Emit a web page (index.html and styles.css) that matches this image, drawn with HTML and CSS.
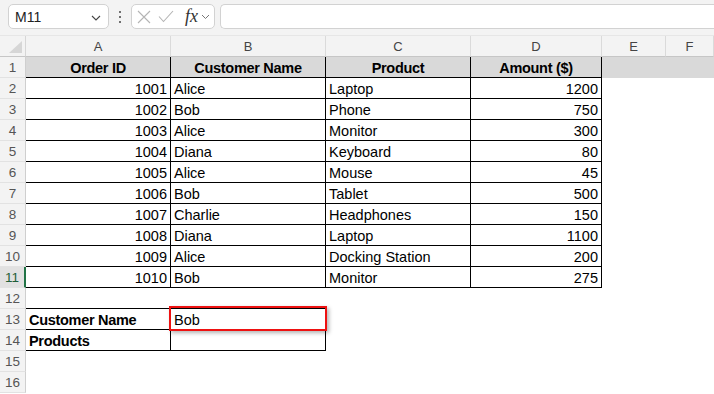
FILE: index.html
```html
<!DOCTYPE html>
<html>
<head>
<meta charset="utf-8">
<link rel="stylesheet" href="styles.css">
</head>
<body>
<div class="toolbar">
  <div class="namebox"><span>M11</span>
    <svg class="chev" width="10" height="6" viewBox="0 0 10 6"><path d="M1 1 L5 5 L9 1" fill="none" stroke="#444" stroke-width="1.1"/></svg>
  </div>
  <div class="dots"><span></span><span></span><span></span></div>
  <div class="fbox">
    <svg width="14" height="14" viewBox="0 0 14 14"><path d="M1 1 L13 13 M13 1 L1 13" stroke="#b4b4b4" stroke-width="1.1" fill="none"/></svg>
    <svg width="16" height="13" viewBox="0 0 16 13"><path d="M1 6.5 L5.5 11.5 L15 1" stroke="#b4b4b4" stroke-width="1.1" fill="none"/></svg>
    <span class="fx">fx</span>
    <svg width="9" height="6" viewBox="0 0 9 6"><path d="M1 1 L4.5 4.5 L8 1" fill="none" stroke="#777" stroke-width="1"/></svg>
  </div>
  <div class="finput"></div>
</div>
<div class="sheet">
  <div class="corner"><svg width="14" height="13" viewBox="0 0 14 13"><polygon points="13,0 13,12 0,12" fill="#d6d6d6"/></svg></div>
  <div class="ch">A</div><div class="ch">B</div><div class="ch">C</div><div class="ch">D</div><div class="ch">E</div><div class="ch">F</div>

  <div class="rh">1</div><div class="c t hd">Order ID</div><div class="c t hd">Customer Name</div><div class="c t hd">Product</div><div class="c t hd">Amount ($)</div><div class="c gfill"></div><div class="c gfill"></div>
  <div class="rh">2</div><div class="c t r">1001</div><div class="c t">Alice</div><div class="c t">Laptop</div><div class="c t r">1200</div><div class="c"></div><div class="c"></div>
  <div class="rh">3</div><div class="c t r">1002</div><div class="c t">Bob</div><div class="c t">Phone</div><div class="c t r">750</div><div class="c"></div><div class="c"></div>
  <div class="rh">4</div><div class="c t r">1003</div><div class="c t">Alice</div><div class="c t">Monitor</div><div class="c t r">300</div><div class="c"></div><div class="c"></div>
  <div class="rh">5</div><div class="c t r">1004</div><div class="c t">Diana</div><div class="c t">Keyboard</div><div class="c t r">80</div><div class="c"></div><div class="c"></div>
  <div class="rh">6</div><div class="c t r">1005</div><div class="c t">Alice</div><div class="c t">Mouse</div><div class="c t r">45</div><div class="c"></div><div class="c"></div>
  <div class="rh">7</div><div class="c t r">1006</div><div class="c t">Bob</div><div class="c t">Tablet</div><div class="c t r">500</div><div class="c"></div><div class="c"></div>
  <div class="rh">8</div><div class="c t r">1007</div><div class="c t">Charlie</div><div class="c t">Headphones</div><div class="c t r">150</div><div class="c"></div><div class="c"></div>
  <div class="rh">9</div><div class="c t r">1008</div><div class="c t">Diana</div><div class="c t">Laptop</div><div class="c t r">1100</div><div class="c"></div><div class="c"></div>
  <div class="rh">10</div><div class="c t r">1009</div><div class="c t">Alice</div><div class="c t">Docking Station</div><div class="c t r">200</div><div class="c"></div><div class="c"></div>
  <div class="rh sel">11</div><div class="c t r">1010</div><div class="c t">Bob</div><div class="c t">Monitor</div><div class="c t r">275</div><div class="c"></div><div class="c"></div>
  <div class="rh">12</div><div class="c bb"></div><div class="c bb"></div><div class="c"></div><div class="c"></div><div class="c"></div><div class="c"></div>
  <div class="rh">13</div><div class="c t b">Customer Name</div><div class="c t">Bob</div><div class="c"></div><div class="c"></div><div class="c"></div><div class="c"></div>
  <div class="rh">14</div><div class="c t b">Products</div><div class="c t"></div><div class="c"></div><div class="c"></div><div class="c"></div><div class="c"></div>
  <div class="rh">15</div><div class="c"></div><div class="c"></div><div class="c"></div><div class="c"></div><div class="c"></div><div class="c"></div>
  <div class="rh">16</div><div class="c"></div><div class="c"></div><div class="c"></div><div class="c"></div><div class="c"></div><div class="c"></div>
</div>
<div class="hilite"></div>
</body>
</html>
```
FILE: styles.css
```css
html, body {
  margin: 0;
  padding: 0;
}
body {
  width: 714px;
  height: 394px;
  overflow: hidden;
  position: relative;
  background: #fff;
  font-family: "Liberation Sans", Arial, sans-serif;
  color: #000;
}
.toolbar {
  height: 36px;
  box-sizing: border-box;
  background: #f3f3f3;
  display: flex;
  align-items: flex-start;
  padding: 4px 0 0 8px;
  border-bottom: 1px solid #e6e6e6;
}
.namebox {
  width: 101px;
  height: 25px;
  box-sizing: border-box;
  background: #fff;
  border: 1px solid #d2d2d2;
  border-radius: 5px;
  display: flex;
  align-items: center;
  justify-content: space-between;
  padding: 0 7px 0 6px;
  font-size: 14px;
  color: #222;
}
.chev { margin-top: 2px; }
.dots {
  width: 22px;
  height: 25px;
  display: flex;
  flex-direction: column;
  align-items: center;
  justify-content: center;
  gap: 3px;
}
.dots span {
  width: 2px;
  height: 2px;
  background: #444;
  border-radius: 1px;
}
.fbox {
  width: 84px;
  height: 25px;
  box-sizing: border-box;
  background: #fff;
  border: 1px solid #d2d2d2;
  border-radius: 5px;
  display: flex;
  align-items: center;
  padding: 0 3px 0 5px;
  gap: 8px;
}
.fbox svg:nth-child(2) { margin-left: -1px; }
.fx {
  font-family: "Liberation Serif", "Times New Roman", serif;
  font-style: italic;
  font-size: 18px;
  color: #333;
  margin-left: 3px;
  margin-right: -5px;
  line-height: 1;
  margin-top: -2px;
}
.finput {
  flex: 1;
  height: 25px;
  margin-left: 5px;
  box-sizing: border-box;
  background: #fff;
  border: 1px solid #d2d2d2;
  border-right: none;
  border-radius: 5px 0 0 5px;
}
.sheet {
  display: grid;
  grid-template-columns: 26px 145px 155px 145px 131px 64px 48px;
  grid-auto-rows: 21px;
}
.corner {
  background: #f3f3f3;
  border-right: 1px solid #d6d6d6;
  border-bottom: 1px solid #c6c6c6;
  box-sizing: border-box;
  display: flex;
  align-items: flex-end;
  justify-content: flex-end;
  padding: 0 2px 2px 0;
}
.ch {
  background: #f3f3f3;
  box-sizing: border-box;
  border-right: 1px solid #dadada;
  border-bottom: 1px solid #c6c6c6;
  font-size: 13px;
  color: #444;
  text-align: center;
  line-height: 20px;
  padding-top: 1px;
}
.rh {
  background: #f3f3f3;
  box-sizing: border-box;
  border-right: 1px solid #cfcfcf;
  border-bottom: 1px solid #e2e2e2;
  font-size: 13.5px;
  color: #555;
  text-align: center;
  line-height: 20px;
  padding-top: 1px;
}
.rh.sel {
  background: #e1e1e1;
  color: #1e5e38;
  border-right: 2px solid #217346;
}
.c {
  box-sizing: border-box;
  font-size: 14.5px;
  line-height: 20px;
  padding: 1px 3px 0;
  white-space: nowrap;
  overflow: hidden;
}
.t {
  border-right: 1px solid #000;
  border-bottom: 1px solid #000;
}
.bb {
  border-bottom: 1px solid #000;
}
.r { text-align: right; }
.hd {
  background: #d9d9d9;
  font-weight: bold;
  text-align: center;
  letter-spacing: -0.3px;
}
.b {
  font-weight: bold;
  letter-spacing: -0.3px;
}
.gfill { background: #d9d9d9; }
.hilite {
  position: absolute;
  left: 169px;
  top: 306px;
  width: 158px;
  height: 25px;
  box-sizing: border-box;
  border: 2px solid #ee1111;
  box-shadow: 2px 2px 4px rgba(0, 0, 0, 0.3);
  pointer-events: none;
}
```
